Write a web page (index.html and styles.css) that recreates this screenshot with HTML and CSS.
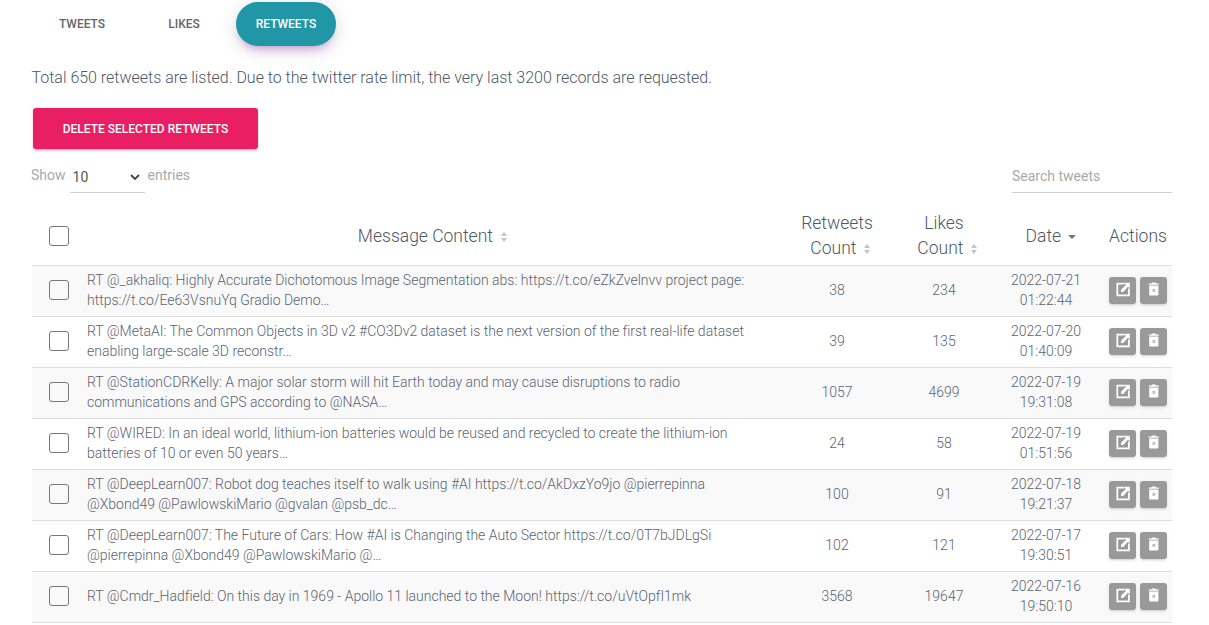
FILE: index.html
```html
<!DOCTYPE html>
<html lang="en">
<head>
<meta charset="utf-8">
<title>Retweets</title>
<link rel="stylesheet" href="styles.css">
</head>
<body>
<svg class="defs" width="0" height="0" aria-hidden="true">
  <symbol id="i-edit" viewBox="0 0 16 16">
    <path d="M9.500 1.700H2.300v11.600h11.600V6.500" fill="none" stroke="#fff" stroke-width="1.700"/>
    <path d="M6 10.100V7.800L10.800 3 9.200.8h5.600v5.400L13 4.800 8.200 10.100z" fill="#fff"/>
  </symbol>
  <symbol id="i-trash" viewBox="0 0 16 16">
    <path d="M6 .6h3.600l.6.9h2.600v1.300H2.800V1.500h2.600z" fill="#fff"/>
    <path d="M3.200 3.500h9.200v8.800c0 .8-.5 1.300-1.300 1.300h-6.600c-.8 0-1.300-.5-1.300-1.300z" fill="#fff"/>
    <path d="M6.600 7.100l2.400 2.700M9 7.100l-2.400 2.700" stroke="#999" stroke-width="1" fill="none"/>
  </symbol>
</svg>
<main class="page">
  <nav class="tabs">
    <a class="tab">Tweets</a>
    <a class="tab">Likes</a>
    <a class="tab tab-active">Retweets</a>
  </nav>
  <p class="summary">Total 650 retweets are listed. Due to the twitter rate limit, the very last 3200 records are requested.</p>
  <button class="delete-btn">Delete selected retweets</button>
  <div class="controls">
    <div class="length">
      <span>Show</span>
      <span class="select"><span>10</span><svg class="chev" viewBox="0 0 10 6" width="10" height="6"><path d="M1 1l4 4 4-4" fill="none" stroke="#444" stroke-width="1.800"/></svg></span>
      <span>entries</span>
    </div>
    <div class="search">Search tweets</div>
  </div>
  <table class="grid">
    <colgroup>
      <col class="c-check"><col class="c-msg"><col class="c-rt"><col class="c-likes"><col class="c-date"><col class="c-act">
    </colgroup>
    <thead>
      <tr>
        <th><span class="box"></span></th>
        <th class="msg-h">Message Content <span class="sort"></span></th>
        <th>Retweets<br>Count <span class="sort sort-tight"></span></th>
        <th>Likes<br>Count <span class="sort sort-tight"></span></th>
        <th class="date-h">Date <span class="sort-down"></span></th>
        <th class="act-h">Actions</th>
      </tr>
    </thead>
    <tbody>
      <tr>
        <td><span class="box"></span></td>
        <td class="msg">RT @_akhaliq: Highly Accurate Dichotomous Image Segmentation abs: https://t.co/eZkZvelnvv project page: https://t.co/Ee63VsnuYq Gradio Demo…</td>
        <td>38</td><td>234</td><td>2022-07-21<br>01:22:44</td>
        <td class="acts"><span class="ab"><svg width="16" height="16"><use href="#i-edit"/></svg></span><span class="ab"><svg width="16" height="16"><use href="#i-trash"/></svg></span></td>
      </tr>
      <tr>
        <td><span class="box"></span></td>
        <td class="msg">RT @MetaAI: The Common Objects in 3D v2 #CO3Dv2 dataset is the next version of the first real-life dataset enabling large-scale 3D reconstr…</td>
        <td>39</td><td>135</td><td>2022-07-20<br>01:40:09</td>
        <td class="acts"><span class="ab"><svg width="16" height="16"><use href="#i-edit"/></svg></span><span class="ab"><svg width="16" height="16"><use href="#i-trash"/></svg></span></td>
      </tr>
      <tr>
        <td><span class="box"></span></td>
        <td class="msg">RT @StationCDRKelly: A major solar storm will hit Earth today and may cause disruptions to radio communications and GPS according to @NASA…</td>
        <td>1057</td><td>4699</td><td>2022-07-19<br>19:31:08</td>
        <td class="acts"><span class="ab"><svg width="16" height="16"><use href="#i-edit"/></svg></span><span class="ab"><svg width="16" height="16"><use href="#i-trash"/></svg></span></td>
      </tr>
      <tr>
        <td><span class="box"></span></td>
        <td class="msg">RT @WIRED: In an ideal world, lithium-ion batteries would be reused and recycled to create the lithium-ion batteries of 10 or even 50 years…</td>
        <td>24</td><td>58</td><td>2022-07-19<br>01:51:56</td>
        <td class="acts"><span class="ab"><svg width="16" height="16"><use href="#i-edit"/></svg></span><span class="ab"><svg width="16" height="16"><use href="#i-trash"/></svg></span></td>
      </tr>
      <tr>
        <td><span class="box"></span></td>
        <td class="msg">RT @DeepLearn007: Robot dog teaches itself to walk using #AI https://t.co/AkDxzYo9jo @pierrepinna @Xbond49 @PawlowskiMario @gvalan @psb_dc…</td>
        <td>100</td><td>91</td><td>2022-07-18<br>19:21:37</td>
        <td class="acts"><span class="ab"><svg width="16" height="16"><use href="#i-edit"/></svg></span><span class="ab"><svg width="16" height="16"><use href="#i-trash"/></svg></span></td>
      </tr>
      <tr>
        <td><span class="box"></span></td>
        <td class="msg">RT @DeepLearn007: The Future of Cars: How #AI is Changing the Auto Sector https://t.co/0T7bJDLgSi @pierrepinna @Xbond49 @PawlowskiMario @…</td>
        <td>102</td><td>121</td><td>2022-07-17<br>19:30:51</td>
        <td class="acts"><span class="ab"><svg width="16" height="16"><use href="#i-edit"/></svg></span><span class="ab"><svg width="16" height="16"><use href="#i-trash"/></svg></span></td>
      </tr>
      <tr>
        <td><span class="box"></span></td>
        <td class="msg">RT @Cmdr_Hadfield: On this day in 1969 - Apollo 11 launched to the Moon! https://t.co/uVtOpfI1mk</td>
        <td>3568</td><td>19647</td><td>2022-07-16<br>19:50:10</td>
        <td class="acts"><span class="ab"><svg width="16" height="16"><use href="#i-edit"/></svg></span><span class="ab"><svg width="16" height="16"><use href="#i-trash"/></svg></span></td>
      </tr>
    </tbody>
  </table>
</main>
</body>
</html>
```

FILE: styles.css
```css
html, body { margin: 0; height: 625px; overflow: hidden; background: #fff; }
body { font-family: Roboto, "Liberation Sans", sans-serif; font-weight: 300; color: #3c4858; }
.defs { position: absolute; }
.page { padding: 2px 37px 0 32px; }
.tabs { display: flex; height: 44px; }
.tab { width: 100px; height: 44px; display: flex; align-items: center; justify-content: center; border-radius: 30px; font-size: 12px; font-weight: 500; text-transform: uppercase; color: #666; letter-spacing: -.02px; }
.tab + .tab { margin-left: 2px; }
.tab-active { background: #2196a6; color: #fff; box-shadow: 0 4px 20px 0 rgba(0,0,0,.14), 0 7px 10px -5px rgba(156,39,176,.4); }
.summary { margin: 22px 0 0 -.5px; font-size: 16px; line-height: 19px; color: #4d5866; letter-spacing: -.012px; }
.delete-btn { display: block; margin: 21px 0 0 1px; width: 225px; height: 41px; border: 0; border-radius: 3px; background: #e91e63; color: #fff; font: 500 12px Roboto, sans-serif; text-transform: uppercase; box-shadow: 0 2px 2px 0 rgba(233,30,99,.14), 0 3px 1px -2px rgba(233,30,99,.2), 0 1px 5px 0 rgba(233,30,99,.12); padding: 0; }
.controls { display: flex; justify-content: space-between; align-items: flex-start; margin-top: 10px; height: 48px; }
.length { display: flex; align-items: flex-start; font-size: 14px; font-weight: 400; color: #aaa; gap: 4px; margin-left: -1px; height: 33px; }
.length > span:first-child, .length > span:last-child { line-height: 33px; }
.length > span:last-child { margin-left: -1px; }
.select { width: 75px; height: 34px; border-bottom: 1px solid #d2d2d2; box-sizing: border-box; display: flex; justify-content: space-between; align-items: center; padding: 3px 5px 0 3px; color: #555; font-weight: 400; }
.chev { display: block; }
.search { width: 160px; height: 34px; box-sizing: border-box; border-bottom: 1px solid #d2d2d2; font-size: 14px; font-weight: 400; color: #aaa; line-height: 35px; }
.grid { width: 1140px; table-layout: fixed; border-collapse: collapse; }
.c-check { width: 43px; } .c-msg { width: 714px; } .c-rt { width: 96px; } .c-likes { width: 118px; } .c-date { width: 86px; } .c-act { width: 83px; }
th { height: 58px; font-size: 17.5px; font-weight: 300; line-height: 25px; text-align: center; padding: 0; color: #4d5866; }
th:first-child, td:first-child { text-align: left; padding-left: 17px; }
.msg-h { padding-left: 2px; }
.date-h { padding-left: 10px; }
.act-h { padding-left: 15px; }
td { height: 48px; padding: 0 0 2px; border-top: 1px solid #ddd; font-size: 14px; line-height: 20px; text-align: center; color: #5a6472; }
tbody tr:last-child td { border-bottom: 1px solid #ddd; }
tbody tr:nth-child(odd) { background: #f9f9f9; }
td.msg { text-align: left; padding-left: 12px; padding-right: 40px; letter-spacing: -.008px; }
.box { display: block; box-sizing: border-box; width: 20px; height: 20px; border: 1px solid #777; border-radius: 3px; }
.sort, .sort-down { display: inline-block; position: relative; width: 8px; height: 10px; margin-left: 3px; vertical-align: 0; }
.sort-tight { margin-right: -8px; }
.sort::before, .sort::after { content: ""; position: absolute; left: .5px; border-left: 3.5px solid transparent; border-right: 3.5px solid transparent; }
.sort::before { top: 0; border-bottom: 4px solid #c4c4c4; }
.sort::after { bottom: 0; border-top: 4px solid #c4c4c4; }
.sort-down::after { content: ""; position: absolute; left: 0; top: 3px; border-left: 4px solid transparent; border-right: 4px solid transparent; border-top: 4px solid #777; }
.acts { text-align: left; font-size: 0; }
td.acts { padding-left: 20px; }
.ab { display: inline-flex; align-items: center; justify-content: center; width: 27px; height: 27px; border-radius: 3px; background: #999; box-shadow: 0 2px 2px 0 rgba(153,153,153,.14), 0 3px 1px -2px rgba(153,153,153,.2), 0 1px 5px 0 rgba(153,153,153,.12); vertical-align: middle; }
.ab + .ab { margin-left: 4px; }
```
